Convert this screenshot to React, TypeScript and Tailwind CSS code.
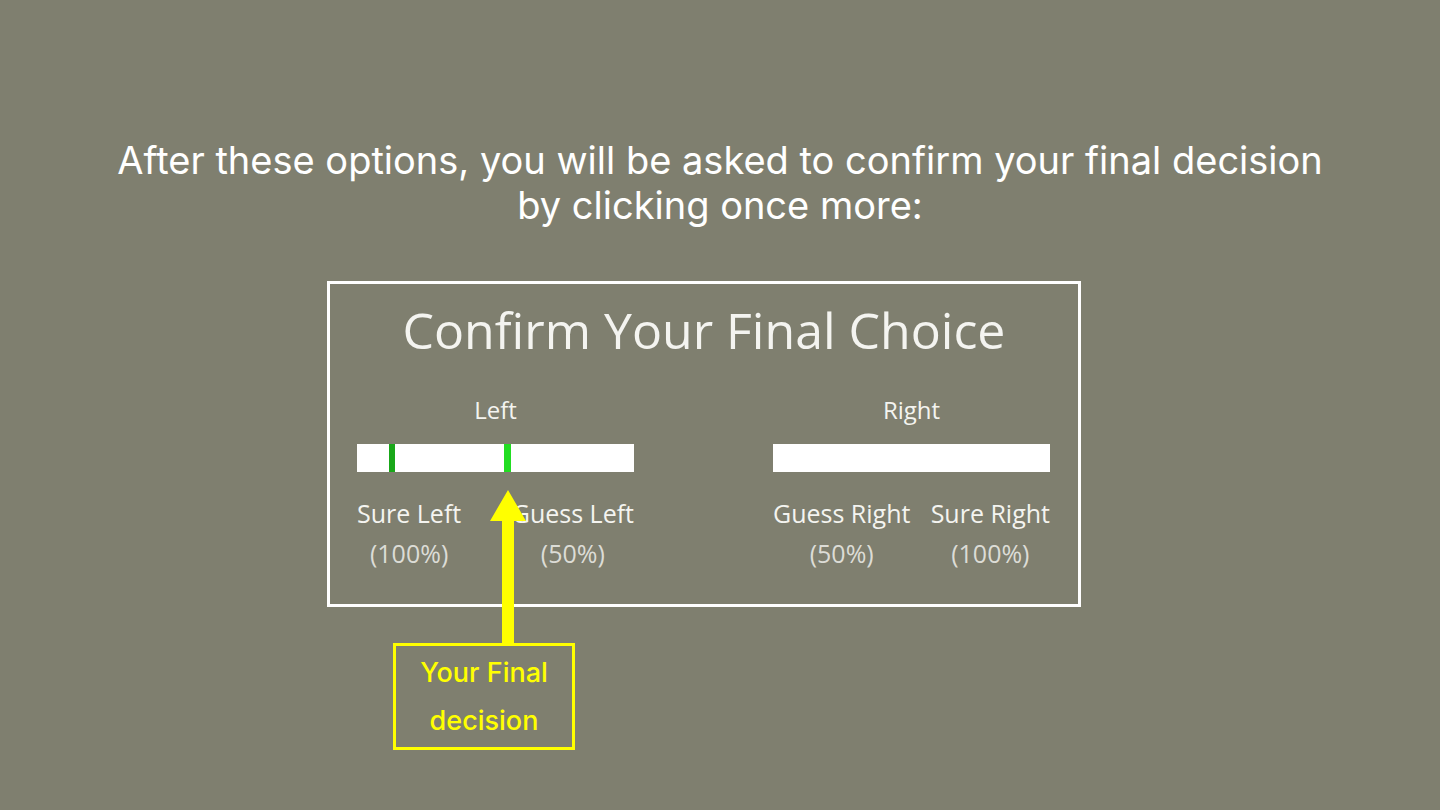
export default function App() {
  return (
    <div className="flex h-[810px] w-[1440px] flex-col items-center bg-[#7f7f6f] pt-[138px] font-['Inter',sans-serif]">
      <h1 className="text-center text-[38px] font-normal leading-[45px] tracking-[0px] text-white">
        After these options, you will be asked to confirm your final decision
        <br />
        by clicking once more:
      </h1>

      <div className="relative mr-[32px] mt-[53px]">
        <div className="flex h-[326px] w-[754px] flex-col border-[3px] border-white font-['Open_Sans',sans-serif] text-[#f4f4f0]">
          <h2 className="mt-[16px] text-center text-[50px] leading-[60px]">Confirm Your Final Choice</h2>
          <div className="mt-[33px] flex justify-between pl-[27px] pr-[28px]">
            <ChoiceColumn
              label="Left"
              options={[
                ['Sure Left', '(100%)'],
                ['Guess Left', '(50%)'],
              ]}
              markers
            />
            <ChoiceColumn
              label="Right"
              options={[
                ['Guess Right', '(50%)'],
                ['Sure Right', '(100%)'],
              ]}
            />
          </div>
        </div>

        {/* annotation arrow */}
        <svg className="absolute left-[162px] top-[209px]" width="38" height="154" viewBox="0 0 38 154">
          <polygon points="19,0 37,31 25,31 25,154 13,154 13,31 1,31" fill="#ffff00" />
        </svg>
        <div className="absolute left-[66px] top-[362px] flex h-[107px] w-[182px] flex-col items-center justify-center border-[3px] border-[#ffff00] text-[27px] leading-[48px] font-medium text-[#ffff00]">
          <span>Your Final</span>
          <span>decision</span>
        </div>
      </div>
    </div>
  );
}

function ChoiceColumn({
  label,
  options,
  markers = false,
}: {
  label: string;
  options: [string, string][];
  markers?: boolean;
}) {
  return (
    <div className="flex w-[277px] flex-col">
      <div className="text-center text-[24px] leading-[34px]">{label}</div>
      <div className="relative mt-[17px] h-[28px] bg-white">
        {markers && (
          <>
            <div className="absolute left-[32px] top-0 h-full w-[6px] bg-[#19a719]" />
            <div className="absolute left-[147px] top-0 h-full w-[7px] bg-[#22dd22]" />
          </>
        )}
      </div>
      <div className="mt-[24px] flex justify-between">
        {options.map(([name, pct]) => (
          <div key={name} className="flex flex-col items-center">
            <span className="text-[25px] leading-[34px]">{name}</span>
            <span className="mt-[6px] text-[25px] leading-[34px] text-[#dcdcd6]">{pct}</span>
          </div>
        ))}
      </div>
    </div>
  );
}
